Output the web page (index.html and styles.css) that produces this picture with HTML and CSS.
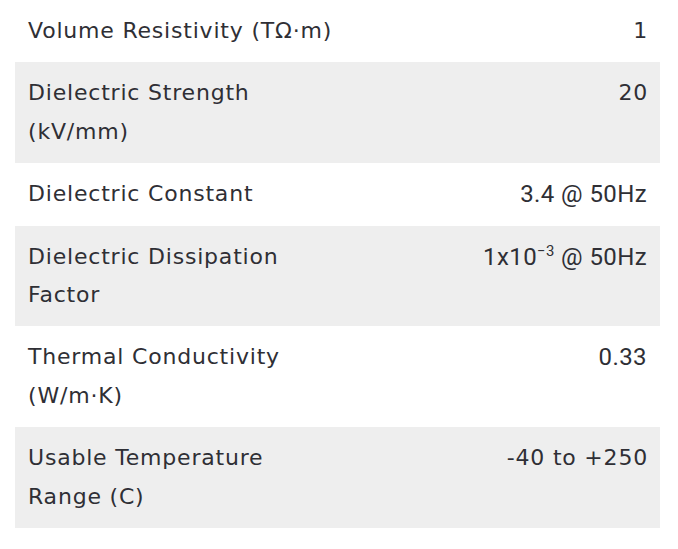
FILE: index.html
```html
<!DOCTYPE html>
<html>
<head>
<meta charset="utf-8">
<link rel="stylesheet" href="styles.css">
</head>
<body>
<table class="specs">
  <tbody>
    <tr><td class="label">Volume Resistivity (TΩ·m)</td><td class="value">1</td></tr>
    <tr class="alt"><td class="label">Dielectric Strength<br>(kV/mm)</td><td class="value">20</td></tr>
    <tr><td class="label">Dielectric Constant</td><td class="value num">3.4 @ 50Hz</td></tr>
    <tr class="alt"><td class="label">Dielectric Dissipation<br>Factor</td><td class="value num">1x10<sup>−3</sup> @ 50Hz</td></tr>
    <tr><td class="label">Thermal Conductivity<br>(W/m·K)</td><td class="value num">0.33</td></tr>
    <tr class="alt"><td class="label">Usable Temperature<br>Range (C)</td><td class="value">-40 to +250</td></tr>
  </tbody>
</table>
</body>
</html>
```
FILE: styles.css
```css
html, body {
  margin: 0;
  padding: 0;
  background: #ffffff;
}
body {
  padding: 0 18px 0 15px;
}
.specs {
  width: 645px;
  border-collapse: collapse;
  font-family: "DejaVu Sans", sans-serif;
  font-size: 22px;
  line-height: 38.4px;
  letter-spacing: 0.8px;
  color: #2f2f35;
}
.specs td {
  padding: 12px 13px;
  vertical-align: top;
}
.specs .label {
  text-align: left;
  width: 60%;
}
.specs .value {
  text-align: right;
  padding-right: 12px;
}
.specs .num {
  font-family: Roboto, "Liberation Sans", sans-serif;
  font-size: 24px;
  letter-spacing: 0.4px;
  padding-right: 13px;
}
.specs .alt {
  background: #eeeeee;
}
.specs sup {
  font-size: 0.62em;
  line-height: 0;
  vertical-align: 0.6em;
}
```
